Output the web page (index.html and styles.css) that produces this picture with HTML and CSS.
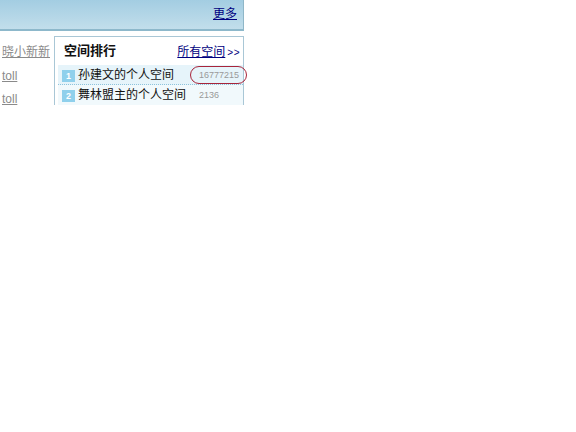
FILE: index.html
```html
<!DOCTYPE html>
<html lang="zh">
<head>
<meta charset="utf-8">
<title>空间排行</title>
<link rel="stylesheet" href="styles.css">
</head>
<body>
<div class="frame">
  <div class="inner">
    <div class="topbar"><a class="more" href="#">更多</a></div>
    <div class="content">
      <ul class="names">
        <li><a href="#">晓小新新</a></li>
        <li><a href="#">toll</a></li>
        <li><a href="#">toll</a></li>
      </ul>
      <section class="rank">
        <header class="rank-head">
          <h2>空间排行</h2>
          <span class="all"><a href="#">所有空间</a><span class="arrows">&gt;&gt;</span></span>
        </header>
        <div class="row first">
          <span class="badge">1</span><span class="title">孙建文的个人空间</span><span class="count">16777215</span>
        </div>
        <div class="row">
          <span class="badge">2</span><span class="title">舞林盟主的个人空间</span><span class="count">2136</span>
        </div>
        <div class="ring"></div>
      </section>
    </div>
  </div>
</div>
</body>
</html>
```
FILE: styles.css
```css
html, body { margin: 0; padding: 0; background: #fff; }
body { width: 576px; height: 432px; overflow: hidden; font-family: "Liberation Sans", "Noto Sans CJK SC", sans-serif; }
.frame { width: 250px; height: 105px; overflow: hidden; }
.inner { width: 244px; }
.topbar {
  height: 31px; box-sizing: border-box; display: flex; justify-content: flex-end; align-items: flex-start;
  padding: 6px 6px 0 0; background: linear-gradient(#a3cde2, #c2deeb);
  border-right: 1px solid #8fb7c8; border-bottom: 2px solid #8db8cb;
}
.more { font-size: 12px; line-height: 16px; color: #000080; }
.content { display: flex; padding-top: 5px; }
.names { list-style: none; margin: 0; padding: 8px 0 0 2px; width: 54px; box-sizing: border-box; flex: none; }
.names li { height: 23.5px; font-size: 12px; line-height: 16px; white-space: nowrap; }
.names a { color: #8a8a8a; }
.rank {
  width: 190px; height: 90px; box-sizing: border-box; position: relative; flex: none;
  border: 1px solid #a9c7d6;
}
.rank-head { height: 28px; display: flex; justify-content: space-between; align-items: center; padding: 0 3px 0 9px; }
.rank-head h2 { margin: 0; font-size: 13px; line-height: 16px; font-weight: bold; color: #111; }
.all { font-size: 12px; line-height: 16px; white-space: nowrap; margin-top: 2px; }
.all a { color: #000080; }
.arrows { font-size: 10px; color: #000080; margin-left: 2px; letter-spacing: 0.5px; }
.row {
  height: 20px; margin-left: 3px; display: flex; align-items: center; background: #f1f9fc;
  box-sizing: border-box;
}
.row.first { background: #e6f4fa; border-bottom: 1px dotted #8fc4dc; }
.badge {
  width: 13px; height: 12px; margin: 2px 3px 0 4px; background: #8fd0ec; color: #fff;
  font-size: 9px; line-height: 12px; text-align: center; font-weight: bold; flex: none;
}
.title { font-size: 12px; line-height: 16px; color: #111; width: 121px; white-space: nowrap; flex: none; }
.count { font-size: 9px; line-height: 12px; color: #999; white-space: nowrap; }
.ring {
  position: absolute; left: 135px; top: 29px; width: 55px; height: 16px;
  border: 1px solid #a8243a; border-radius: 9px;
}
```
